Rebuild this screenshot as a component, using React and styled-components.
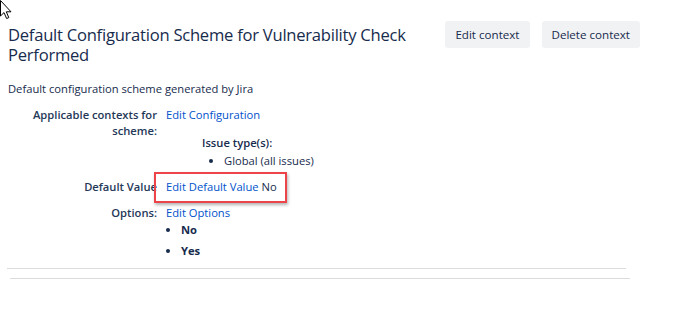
import React from "react";
import styled, { createGlobalStyle } from "styled-components";

const GlobalStyle = createGlobalStyle`
  body {
    margin: 0;
    background: #fff;
    font-family: "Open Sans", "Noto Sans", sans-serif;
    color: #172b4d;
  }
`;

const Page = styled.div`
  position: relative;
  padding: 21px 45px 0 8px;
`;

const Cursor = styled.svg`
  position: absolute;
  top: 0;
  left: 0;
`;

const Header = styled.div`
  display: flex;
  justify-content: space-between;
  align-items: flex-start;
`;

const Title = styled.h1`
  margin: 4px 0 0;
  width: 425px;
  font-size: 16.6px;
  letter-spacing: -0.25px;
  font-weight: 400;
  line-height: 20px;
  color: #172b4d;
`;

const Actions = styled.div`
  display: flex;
  gap: 12px;
`;

const Button = styled.button`
  height: 27px;
  padding: 0 10px;
  border: none;
  border-radius: 3px;
  background: #f1f2f4;
  color: #172b4d;
  font-family: "Open Sans", sans-serif;
  font-size: 11.6px;
`;

const Description = styled.p`
  margin: 16px 0 0;
  font-size: 11.2px;
  line-height: 16px;
`;

const Fields = styled.div`
  margin-top: 10px;
  display: flex;
  flex-direction: column;
  gap: 10px;
`;

const Field = styled.div`
  display: grid;
  grid-template-columns: 130px 1fr;
  column-gap: 9px;
  padding-left: 19px;
  font-size: 11.2px;
  line-height: 16px;
`;

const Label = styled.div`
  text-align: right;
  font-weight: 600;
  color: #253858;
`;

const Value = styled.div`
  position: relative;
`;

const Link = styled.a`
  color: #0052cc;
  text-decoration: none;
`;

const SubHeading = styled.div`
  margin: 12px 0 0 36px;
  font-weight: 600;
`;

const List = styled.ul`
  margin: ${(p) => (p.$indent ? "2px 0 0 44px" : "1px 0 0 1px")};
  padding: 0 0 0 14px;
  list-style: disc;
  font-weight: ${(p) => (p.$bold ? 700 : 400)};
  li {
    margin-bottom: ${(p) => (p.$bold ? "5px" : "0")};
  }
  li:last-child {
    margin-bottom: 0;
  }
`;

const Highlight = styled.div`
  position: absolute;
  left: -12px;
  top: -7px;
  width: 129px;
  height: 27px;
  border: 2px solid #ec4448;
  box-shadow: 1px 2px 3px rgba(0, 0, 0, 0.3);
  pointer-events: none;
`;

const Rule = styled.hr`
  margin: ${(p) => p.$m};
  border: none;
  border-top: 1px solid #dcdcdc;
`;

export default function App() {
  return (
    <>
      <GlobalStyle />
      <Page>
        <Cursor width="13" height="20" viewBox="0 0 13 20">
          <path
            d="M0.5 0.5 L0.5 16 L4 12.6 L6.6 18.5 L8.8 17.6 L6.3 11.8 L11 11.8 Z"
            fill="#fff"
            stroke="#000"
            strokeWidth="1"
            strokeLinejoin="miter"
          />
        </Cursor>
        <Header>
          <Title>Default Configuration Scheme for Vulnerability Check Performed</Title>
          <Actions>
            <Button>Edit context</Button>
            <Button>Delete context</Button>
          </Actions>
        </Header>
        <Description>Default configuration scheme generated by Jira</Description>
        <Fields>
          <Field>
            <Label>Applicable contexts for scheme:</Label>
            <Value>
              <Link href="#">Edit Configuration</Link>
              <SubHeading>Issue type(s):</SubHeading>
              <List $indent>
                <li>Global (all issues)</li>
              </List>
            </Value>
          </Field>
          <Field>
            <Label>Default Value</Label>
            <Value>
              <Link href="#">Edit Default Value</Link> No
              <Highlight />
            </Value>
          </Field>
          <Field>
            <Label>Options:</Label>
            <Value>
              <Link href="#">Edit Options</Link>
              <List $bold>
                <li>No</li>
                <li>Yes</li>
              </List>
            </Value>
          </Field>
        </Fields>
        <Rule $m="9px 14px 0 -1px" />
        <Rule $m="9px 10px 0 2px" />
      </Page>
    </>
  );
}
